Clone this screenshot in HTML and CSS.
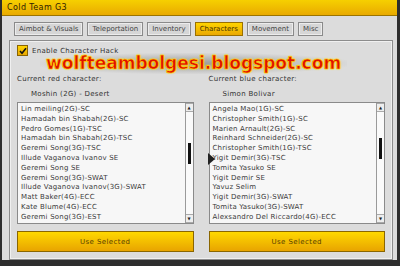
FILE: index.html
```html
<!DOCTYPE html>
<html lang="en">
<head>
  <meta charset="UTF-8">
  <title>Cold Team G3</title>
  <link rel="stylesheet" href="styles.css">
</head>
<body>

<div class="window">
  <div class="titlebar">Cold Team G3</div>

  <div class="tabs">
    <div class="tab">Aimbot &amp; Visuals</div>
    <div class="tab">Teleportation</div>
    <div class="tab">Inventory</div>
    <div class="tab active">Characters</div>
    <div class="tab">Movement</div>
    <div class="tab">Misc</div>
  </div>

  <div class="panel">
    <label class="check-row">
      <span class="checkbox">
        <svg width="8" height="8" viewBox="0 0 8 8"><path d="M1 4 L3 6.2 L7 1.2" fill="none" stroke="#111" stroke-width="1.6"/></svg>
      </span>
      Enable Character Hack
    </label>

    <div class="watermark">wolfteambolgesi.blogspot.com</div>

    <div class="columns">
      <div class="column">
        <div class="label">Current red character:</div>
        <div class="current">Moshin (2G) - Desert</div>
        <div class="listbox">
          <ul class="items">
            <li>Lin meiling(2G)-SC</li>
            <li>Hamadah bin Shabah(2G)-SC</li>
            <li>Pedro Gomes(1G)-TSC</li>
            <li>Hamadah bin Shabah(2G)-TSC</li>
            <li>Geremi Song(3G)-TSC</li>
            <li>Illude Vaganova Ivanov SE</li>
            <li>Geremi Song SE</li>
            <li>Geremi Song(3G)-SWAT</li>
            <li>Illude Vaganova Ivanov(3G)-SWAT</li>
            <li>Matt Baker(4G)-ECC</li>
            <li>Kate Blume(4G)-ECC</li>
            <li>Geremi Song(3G)-EST</li>
          </ul>
          <div class="scrollbar">
            <span class="arrow">&#9650;</span>
            <div class="track"><span class="thumb thumb-red"></span></div>
            <span class="arrow">&#9660;</span>
          </div>
        </div>
        <button class="use-btn">Use Selected</button>
      </div>

      <div class="column">
        <div class="label">Current blue character:</div>
        <div class="current">Simon Bolivar</div>
        <div class="listbox">
          <ul class="items">
            <li>Angela Mao(1G)-SC</li>
            <li>Christopher Smith(1G)-SC</li>
            <li>Marien Arnault(2G)-SC</li>
            <li>Reinhard Schneider(2G)-SC</li>
            <li>Christopher Smith(1G)-TSC</li>
            <li>Yigit Demir(3G)-TSC</li>
            <li>Tomita Yasuko SE</li>
            <li>Yigit Demir SE</li>
            <li>Yavuz Selim</li>
            <li>Yigit Demir(3G)-SWAT</li>
            <li>Tomita Yasuko(3G)-SWAT</li>
            <li>Alexsandro Del Riccardo(4G)-ECC</li>
          </ul>
          <div class="scrollbar">
            <span class="arrow">&#9650;</span>
            <div class="track"><span class="thumb thumb-blue"></span></div>
            <span class="arrow">&#9660;</span>
          </div>
        </div>
        <button class="use-btn">Use Selected</button>
      </div>
    </div>

    <svg class="cursor" width="8" height="12" viewBox="0 0 8 12"><polygon points="0,0 7,6 0,12" fill="#222"/></svg>
  </div>
</div>

</body>
</html>
```

FILE: styles.css
```css
body {
  margin: 0;
  background-color: #2e2e2e;
  font-family: "DejaVu Sans", Verdana, sans-serif;
  font-size: 7px;
  color: #333;
  overflow: hidden;
}

.window {
  margin-left: 2px;
  width: 395px;
  height: 260px;
  background-color: #dcdcdc;
  display: flex;
  flex-direction: column;
}

.titlebar {
  height: 15px;
  line-height: 15px;
  padding-left: 5px;
  background: linear-gradient(#f6d000, #e9aa00);
  border-bottom: 1px solid #9a7400;
  font-size: 8px;
  color: #2e2200;
  letter-spacing: 0.4px;
}

.tabs {
  display: flex;
  gap: 4px;
  padding: 6px 0 0 12px;
}

.tab {
  height: 12px;
  line-height: 12px;
  padding: 0 4px;
  border: 1px solid #8a8a8a;
  box-shadow: inset 0 0 0 1px #ececec;
  background-color: #d6d6d6;
  color: #444;
}

.tab.active {
  background: linear-gradient(#ffd400, #eaa800);
  border-color: #9a7000;
  box-shadow: none;
  color: #4a3400;
}

.panel {
  position: relative;
  margin: 4px 4px 0 7px;
  height: 216px;
  border: 1px solid #8c8c8c;
  box-shadow: inset 0 0 0 1px #f0f0f0;
  padding: 4px 7px 0 7px;
}

.check-row {
  display: flex;
  align-items: center;
  gap: 4px;
  height: 11px;
  color: #333;
  letter-spacing: 0.3px;
}

.checkbox {
  width: 9px;
  height: 9px;
  border: 1px solid #8a6400;
  background: linear-gradient(#ffd400, #e9a800);
  display: flex;
  align-items: center;
  justify-content: center;
}

.watermark {
  position: absolute;
  left: 30px;
  top: 12px;
  padding: 0 6px;
  font-family: "DejaVu Sans", Verdana, sans-serif;
  font-weight: bold;
  font-size: 17px;
  letter-spacing: 0;
  line-height: 21px;
  color: #e01000;
  -webkit-text-stroke: 0.6px #ffd000;
  text-shadow: 0 0 2px #ffe000, 0 0 1px #ffd000;
  background: radial-gradient(ellipse at center, rgba(110, 110, 110, 0.6), rgba(140, 140, 140, 0) 75%);
}

.columns {
  display: flex;
  gap: 15px;
  margin-top: 18px;
}

.column {
  flex: 1;
  display: flex;
  flex-direction: column;
}

.label {
  height: 10px;
  line-height: 10px;
  letter-spacing: 0.3px;
}

.current {
  height: 10px;
  line-height: 10px;
  margin-top: 5px;
  padding-left: 14px;
  letter-spacing: 0.3px;
}

.listbox {
  margin-top: 3px;
  height: 120px;
  border: 1px solid #8a8a8a;
  background-color: #f7f7f7;
  display: flex;
}

.items {
  flex: 1;
  list-style: none;
  margin: 0;
  padding: 2px 0 0 3px;
  line-height: 9.8px;
  letter-spacing: 0.2px;
  color: #3a3a3a;
  white-space: nowrap;
  overflow: hidden;
}

.scrollbar {
  width: 7px;
  border-left: 1px solid #9a9a9a;
  background-color: #fafafa;
  display: flex;
  flex-direction: column;
}

.arrow {
  height: 7px;
  font-size: 4px;
  line-height: 7px;
  text-align: center;
  color: #222;
  border: 1px solid #aaa;
  border-left: none;
  border-right: none;
  background-color: #eee;
}

.track {
  flex: 1;
  position: relative;
}

.thumb {
  position: absolute;
  left: 2px;
  width: 3px;
  height: 21px;
  background-color: #111;
}

.thumb-red {
  top: 31px;
}

.thumb-blue {
  top: 26px;
}

.use-btn {
  margin-top: 7px;
  height: 21px;
  border: 1px solid #8a6600;
  background: linear-gradient(#ffd800, #e8a400);
  font-family: "DejaVu Sans", Verdana, sans-serif;
  font-size: 7px;
  letter-spacing: 0.4px;
  color: #5a4000;
  padding: 0;
}

.cursor {
  position: absolute;
  left: 198px;
  top: 112px;
}
```
